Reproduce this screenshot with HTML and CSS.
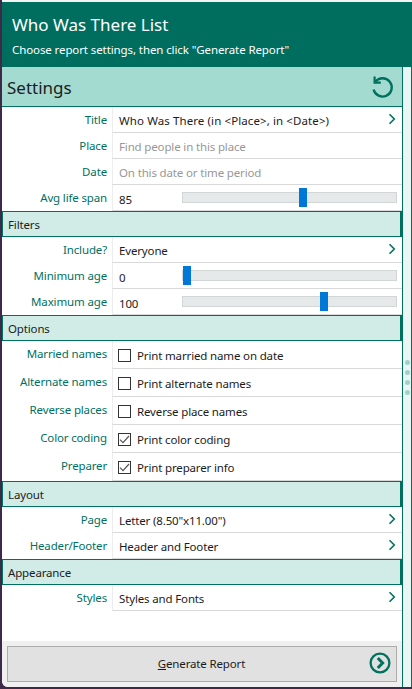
FILE: index.html
```html
<!DOCTYPE html>
<html lang="en">
<head>
  <meta charset="UTF-8">
  <title>Who Was There List</title>
  <link rel="stylesheet" href="styles.css">
</head>
<body>
  <div class="window">
    <header class="app-head">
      <h1>Who Was There List</h1>
      <p>Choose report settings, then click "Generate Report"</p>
    </header>

    <div class="body-wrap">
      <main class="panel">
        <div class="settings-bar">
          <h2>Settings</h2>
          <svg class="undo" width="26" height="26" viewBox="0 0 26 26" fill="none" stroke="#00705f" stroke-width="2.4">
            <path d="M6.4 7.6A9.2 9.2 0 1 1 4.6 15.5"/>
            <path d="M5.6 2.6V8.6H11.8" stroke-width="2.2"/>
          </svg>
        </div>

        <div class="rows">
          <div class="row"><label>Title</label><div class="val wide">Who Was There (in &lt;Place&gt;, in &lt;Date&gt;)<svg class="chev" width="8" height="12" viewBox="0 0 8 12" fill="none"><path d="M1.5 1.2 6.3 6 1.5 10.8"/></svg></div></div>
          <div class="row"><label>Place</label><div class="val hint">Find people in this place</div></div>
          <div class="row"><label>Date</label><div class="val hint">On this date or time period</div></div>
          <div class="row"><label>Avg life span</label><div class="val num"><span class="n">85</span><div class="track"><div class="rail"><i class="thumb" style="left:56.7%"></i></div></div></div></div>
        </div>

        <div class="section">Filters</div>
        <div class="rows">
          <div class="row"><label>Include?</label><div class="val">Everyone<svg class="chev" width="8" height="12" viewBox="0 0 8 12" fill="none"><path d="M1.5 1.2 6.3 6 1.5 10.8"/></svg></div></div>
          <div class="row"><label>Minimum age</label><div class="val num"><span class="n">0</span><div class="track"><div class="rail"><i class="thumb" style="left:0%"></i></div></div></div></div>
          <div class="row"><label>Maximum age</label><div class="val num"><span class="n">100</span><div class="track"><div class="rail"><i class="thumb" style="left:66.7%"></i></div></div></div></div>
        </div>

        <div class="section">Options</div>
        <div class="rows checks">
          <div class="row"><label>Married names</label><div class="val"><span class="box"></span>Print married name on date</div></div>
          <div class="row"><label>Alternate names</label><div class="val"><span class="box"></span>Print alternate names</div></div>
          <div class="row"><label>Reverse places</label><div class="val"><span class="box"></span>Reverse place names</div></div>
          <div class="row"><label>Color coding</label><div class="val"><span class="box"><svg width="11" height="11" viewBox="0 0 11 11" fill="none"><path d="M1 5.6 4 8.6 10 2"/></svg></span>Print color coding</div></div>
          <div class="row"><label>Preparer</label><div class="val"><span class="box"><svg width="11" height="11" viewBox="0 0 11 11" fill="none"><path d="M1 5.6 4 8.6 10 2"/></svg></span>Print preparer info</div></div>
        </div>

        <div class="section">Layout</div>
        <div class="rows">
          <div class="row"><label>Page</label><div class="val">Letter (8.50"x11.00")<svg class="chev" width="8" height="12" viewBox="0 0 8 12" fill="none"><path d="M1.5 1.2 6.3 6 1.5 10.8"/></svg></div></div>
          <div class="row"><label>Header/Footer</label><div class="val">Header and Footer<svg class="chev" width="8" height="12" viewBox="0 0 8 12" fill="none"><path d="M1.5 1.2 6.3 6 1.5 10.8"/></svg></div></div>
        </div>

        <div class="section">Appearance</div>
        <div class="rows">
          <div class="row"><label>Styles</label><div class="val">Styles and Fonts<svg class="chev" width="8" height="12" viewBox="0 0 8 12" fill="none"><path d="M1.5 1.2 6.3 6 1.5 10.8"/></svg></div></div>
        </div>

        <div class="spacer"></div>

        <footer class="foot">
          <button class="gen">
            <span><u>G</u>enerate Report</span>
            <svg class="go" width="24" height="24" viewBox="0 0 24 24" fill="none" stroke="#00705f">
              <circle cx="12" cy="12" r="9.4" stroke-width="2.3"/>
              <path d="M9.8 7 14.6 12 9.8 17" stroke-width="3"/>
            </svg>
          </button>
        </footer>
      </main>

      <aside class="strip">
        <i></i><i></i><i></i><i></i>
      </aside>
    </div>
  </div>
</body>
</html>
```

FILE: styles.css
```css
* {
  box-sizing: border-box;
  margin: 0;
  padding: 0;
}

html, body {
  height: 100%;
  overflow: hidden;
}

body {
  background: #3d2a48;
  font-family: "Noto Sans", "Open Sans", sans-serif;
  font-size: 11.5px;
  letter-spacing: -0.15px;
  color: #1c1c1c;
}

.window {
  display: flex;
  flex-direction: column;
  height: 687px;
  margin-left: 2px;
  border-top: 2px solid #f4f4f4;
  border-bottom-left-radius: 6px;
  overflow: hidden;
  background: #fff;
}

.app-head {
  height: 65px;
  flex: none;
  padding: 5px 10px 0;
  background: #006e5f;
  color: #fff;
}

.app-head h1 {
  font-size: 17px;
  font-weight: 400;
  letter-spacing: 0;
  line-height: 36px;
}

.app-head p {
  margin-top: -2px;
  font-size: 11.5px;
  line-height: 17px;
  letter-spacing: -0.1px;
}

.body-wrap {
  flex: 1;
  display: flex;
  min-height: 0;
}

.panel {
  flex: 1;
  display: flex;
  flex-direction: column;
  border-right: 1px solid #00705f;
}

.settings-bar {
  flex: none;
  height: 40px;
  display: flex;
  align-items: center;
  justify-content: space-between;
  padding: 0 7px 0 5px;
  background: #a3dbd1;
  border-bottom: 1px solid #00705f;
}

.settings-bar h2 {
  font-size: 17px;
  font-weight: 400;
  letter-spacing: 0;
  padding-top: 2px;
}

.rows {
  flex: none;
}

.row {
  display: flex;
  height: 26px;
}

.row label {
  flex: none;
  width: 110px;
  padding-right: 5px;
  text-align: right;
  line-height: 25px;
  color: #00705f;
}

.val {
  flex: 1;
  display: flex;
  align-items: center;
  padding: 2px 0 0 6px;
  border-left: 1px solid #ededed;
  border-bottom: 1px solid #d9d9d9;
  white-space: nowrap;
}

.wide {
  letter-spacing: 0.1px;
}

.hint {
  color: #979797;
}

.chev {
  margin-left: auto;
  margin-right: 6px;
  margin-bottom: 3px;
}

.chev path {
  stroke: #00705f;
  stroke-width: 1.6;
}

.num {
  padding-top: 0;
}

.num .n {
  width: 63px;
  padding-top: 3px;
}

.track {
  width: 215px;
  height: 11px;
  background: #e6e9e9;
  border: 1px solid #d3d6d6;
}

.rail {
  position: relative;
  height: 100%;
  margin-right: 8px;
}

.thumb {
  position: absolute;
  top: -5px;
  width: 8px;
  height: 19px;
  background: #0078d7;
}

.section {
  flex: none;
  height: 26px;
  line-height: 26px;
  padding-left: 5px;
  background: #d1ece6;
  border: 1px solid #00705f;
  border-right-width: 2px;
}

.checks .row {
  height: 28px;
}

.checks .val {
  padding: 1px 0 0 5px;
}

.checks label {
  line-height: 25px;
}

.box {
  flex: none;
  width: 13px;
  height: 13px;
  margin-right: 6px;
  border: 1px solid #333;
  display: flex;
  align-items: center;
  justify-content: center;
}

.box path {
  stroke: #555;
  stroke-width: 1.2;
}

.spacer {
  flex: 1;
}

.foot {
  flex: none;
  height: 46px;
  padding: 5px;
  background: #f0f0f0;
}

.gen {
  display: flex;
  align-items: center;
  justify-content: center;
  position: relative;
  width: 100%;
  height: 36px;
  padding: 0 1px 2px 0;
  border: 1px solid #adadad;
  background: #e1e1e1;
  font: inherit;
  letter-spacing: inherit;
  color: #1c1c1c;
}

.go {
  position: absolute;
  right: 4px;
  top: 4px;
}

.strip {
  flex: none;
  width: 9px;
  display: flex;
  flex-direction: column;
  align-items: center;
  justify-content: center;
  gap: 5px;
  padding-left: 1px;
  background: #eaf6f3;
  border-right: 1px solid #00705f;
}

.strip i {
  width: 5px;
  height: 5px;
  border-radius: 50%;
  background: #9fd3c8;
}
```
